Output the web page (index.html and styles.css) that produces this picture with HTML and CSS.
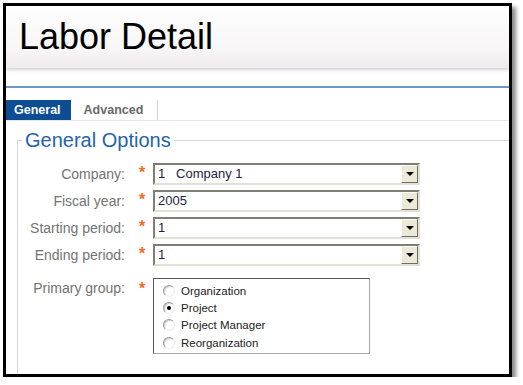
FILE: index.html
```html
<!DOCTYPE html>
<html lang="en">
<head>
  <meta charset="UTF-8">
  <title>Labor Detail</title>
  <link rel="stylesheet" href="styles.css">
</head>
<body>
  <div class="frame">
    <header class="title-bar">
      <h1>Labor Detail</h1>
    </header>

    <nav class="tabs">
      <span class="tab active">General</span>
      <span class="tab">Advanced</span>
    </nav>

    <fieldset class="options">
      <legend>General Options</legend>
      <div class="form-grid">
        <label>Company:</label>
        <span class="req">*</span>
        <div class="select"><span class="value">1&nbsp;&nbsp;&nbsp;Company 1</span><span class="arrow"></span></div>

        <label>Fiscal year:</label>
        <span class="req">*</span>
        <div class="select"><span class="value">2005</span><span class="arrow"></span></div>

        <label>Starting period:</label>
        <span class="req">*</span>
        <div class="select"><span class="value">1</span><span class="arrow"></span></div>

        <label>Ending period:</label>
        <span class="req">*</span>
        <div class="select"><span class="value">1</span><span class="arrow"></span></div>

        <label class="group-label">Primary group:</label>
        <span class="req group-req">*</span>
        <div class="radio-box">
          <div class="radio-item"><span class="radio"></span>Organization</div>
          <div class="radio-item"><span class="radio checked"></span>Project</div>
          <div class="radio-item"><span class="radio"></span>Project Manager</div>
          <div class="radio-item"><span class="radio"></span>Reorganization</div>
        </div>
      </div>
    </fieldset>
  </div>
</body>
</html>
```

FILE: styles.css
```css
body {
  margin: 0;
  padding: 0;
  background: #fff;
  font-family: 'Liberation Sans', Arial, sans-serif;
}

.frame {
  box-sizing: border-box;
  width: 509px;
  height: 374px;
  margin: 3px 0 0 3px;
  border: 3px solid #000;
  background: #fff;
  box-shadow: 4px 4px 4px rgba(0, 0, 0, 0.45);
  overflow: hidden;
}

.title-bar {
  height: 62px;
  background-image: linear-gradient(#fefefe, #f8f6f7 70%, #f0ebee);
  box-shadow: 0 2px 3px rgba(120, 105, 112, 0.3);
}

.title-bar h1 {
  margin: 0;
  padding-left: 13px;
  font-size: 36px;
  font-weight: normal;
  line-height: 62px;
  color: #000;
}

.tabs {
  display: flex;
  margin-top: 18px;
  padding-top: 12px;
  border-top: 2px solid #6b9ac8;
  border-bottom: 1px solid #e6e6e6;
}

.tab {
  font-size: 12.5px;
  font-weight: bold;
  line-height: 20px;
  color: #6a6a6a;
  padding: 0 14px 0 13px;
  border-right: 1px solid #d4d4d4;
}

.tab.active {
  background: #0d4d93;
  color: #fff;
  padding: 0 10px 0 8px;
  border-right: none;
}

.options {
  margin: 8px 0 0 11px;
  padding: 12px 0 6px 0;
  border: none;
  border-top: 1px solid #d6d6d6;
  border-left: 1px solid #d6d6d6;
}

.options legend {
  margin-left: 4px;
  padding: 0 3px;
  font-size: 20px;
  line-height: 22px;
  color: #2563aa;
}

.form-grid {
  display: grid;
  grid-template-columns: 107px 28px 267px;
  grid-auto-rows: 22px;
  row-gap: 5px;
}

.form-grid label {
  align-self: center;
  text-align: right;
  font-size: 14px;
  color: #737373;
}

.req {
  padding-left: 14px;
  padding-top: 2px;
  font-size: 16px;
  font-weight: bold;
  line-height: 16px;
  color: #f26a1b;
}

.select {
  box-sizing: border-box;
  display: flex;
  height: 22px;
  border: 2px solid;
  border-color: #807d72 #e3e1d7 #e3e1d7 #807d72;
  background: #fff;
}

.select .value {
  flex: 1;
  padding-left: 3px;
  font-size: 13px;
  line-height: 18px;
  color: #241c45;
}

.arrow {
  box-sizing: border-box;
  width: 17px;
  height: 18px;
  background: #ece9d8;
  border: 1px solid;
  border-color: #fff #716f64 #716f64 #fff;
  display: flex;
  align-items: center;
  justify-content: center;
}

.arrow::after {
  content: "";
  border-left: 4px solid transparent;
  border-right: 4px solid transparent;
  border-top: 4px solid #000;
}

.group-label {
  grid-row: span 4;
  align-self: start !important;
  padding-top: 9px;
}

.group-req {
  grid-row: span 4;
  padding-top: 10px;
}

.radio-box {
  grid-row: span 4;
  box-sizing: border-box;
  width: 217px;
  height: 76px;
  margin-top: 7px;
  padding: 3px 0 0 9px;
  border: 1px solid;
  border-color: #555 #a8a8a8 #a8a8a8 #555;
  background: #fff;
}

.radio-item {
  display: flex;
  align-items: center;
  height: 17.3px;
  font-size: 11.5px;
  color: #222;
}

.radio {
  box-sizing: border-box;
  width: 12px;
  height: 12px;
  margin-right: 6px;
  border-radius: 50%;
  border: 1px solid;
  border-color: #9a9a9a #eee #eee #9a9a9a;
  box-shadow: inset 1px 1px 0 #d0d0d0;
  display: flex;
  align-items: center;
  justify-content: center;
}

.radio.checked::after {
  content: "";
  width: 4px;
  height: 4px;
  border-radius: 50%;
  background: #000;
}
```
